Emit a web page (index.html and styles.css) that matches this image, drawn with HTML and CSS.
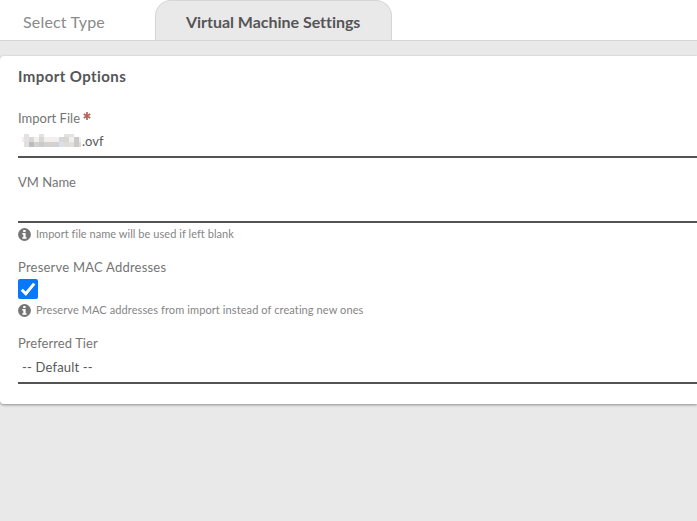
FILE: index.html
```html
<!DOCTYPE html>
<html lang="en">
<head>
<meta charset="utf-8">
<title>Virtual Machine Settings</title>
<link rel="stylesheet" href="styles.css">
</head>
<body>
<nav class="tabs">
  <div class="tab first"><span class="t-type">Select Type</span></div>
  <div class="tab active"><span class="t-settings">Virtual Machine Settings</span></div>
</nav>
<main class="panel">
  <h1><span class="t-options">Import Options</span></h1>
  <section class="field file">
    <label><span class="t-file">Import File</span><svg class="required" viewBox="0 0 8 8"><path d="M4 0v8M.7 2l6.6 4M.7 6l6.6-4"/></svg></label>
    <div class="control"><svg class="mosaic" viewBox="0 0 60 13" shape-rendering="crispEdges">
      <path fill="#f2f0ef" d="M0 3h59v5H0z"/>
      <path fill="#e3e1e1" d="M2 0h5v8H2zM17 0h5v3h-5zM42 0h10v3H42z"/>
      <path fill="#d9d6d6" d="M7 3h5v5H7zM17 3h5v5h-5zM37 3h10v5H37z"/>
      <path fill="#e4dfda" d="M2 8h5v5H2zM47 8h5v5h-5z"/>
      <path fill="#b9bdc3" d="M7 8h5v5H7z"/>
      <path fill="#d3d0d2" d="M12 8h5v5h-5zM22 8h15v5H22z"/>
      <path fill="#cacaca" d="M17 8h5v5h-5zM52 3h5v10h-5z"/>
      <path fill="#d9e1e8" d="M37 8h5v5h-5z"/>
      <path fill="#dcdcda" d="M42 8h5v5h-5zM57 8h2v5h-2z"/>
    </svg><span class="t-ovf">.ovf</span></div>
  </section>
  <section class="field name">
    <label><span class="t-name">VM Name</span></label>
    <div class="control"></div>
    <p class="help"><svg class="info" viewBox="0 0 13 13"><circle cx="6.5" cy="6.5" r="6.4"/><path d="M5.2 2h2.4v2H5.2zM4.3 5h3.3v4.2h1v1.6H4.3V9.2h1V6.6h-1z"/></svg><span class="t-help1">Import file name will be used if left blank</span></p>
  </section>
  <section class="field mac">
    <label><span class="t-mac">Preserve MAC Addresses</span></label>
    <svg class="checkbox" viewBox="0 0 20 20"><rect width="20" height="20" rx="2"/><path d="M3.8 10.7l4 4L16.2 4.6"/></svg>
    <p class="help"><svg class="info" viewBox="0 0 13 13"><circle cx="6.5" cy="6.5" r="6.4"/><path d="M5.2 2h2.4v2H5.2zM4.3 5h3.3v4.2h1v1.6H4.3V9.2h1V6.6h-1z"/></svg><span class="t-help2">Preserve MAC addresses from import instead of creating new ones</span></p>
  </section>
  <section class="field tier">
    <label><span class="t-tier">Preferred Tier</span></label>
    <div class="control"><span class="t-default">-- Default --</span></div>
  </section>
</main>
</body>
</html>
```

FILE: styles.css
```css
* { box-sizing: border-box; }
body {
  margin: 0;
  min-height: 521px;
  background: #e9e9e9;
  color: #757575;
  font: 13px/18px Lato, sans-serif;
  font-variant-ligatures: none;
  overflow: hidden;
}
span { white-space: nowrap; }
.tabs {
  display: flex;
  height: 41px;
  background: #fff;
  border-bottom: 1px solid #d6d6d6;
  font-size: 16px;
  line-height: 43px;
}
.first { width: 155px; padding-left: 23px; color: #8a8a8a; }
.active {
  width: 237px;
  height: 40px;
  padding-left: 30px;
  background: #e9e9e9;
  border: 1px solid #d6d6d6;
  border-bottom: 0;
  border-radius: 16px 16px 0 0;
  color: #555557;
  font-weight: 700;
  line-height: 41px;
}
.panel {
  height: 348px;
  margin-top: 15px;
  padding: 10px 0 0 18px;
  background: #fff;
  border-radius: 4px 0 0 4px;
  box-shadow: 0 1px 3px rgba(0, 0, 0, .4);
}
h1 { margin: 0; height: 43px; font-size: 15px; line-height: 20px; color: #555557; }
.field { display: flex; flex-direction: column; }
.file { height: 64px; }
.name { height: 85px; }
.mac { height: 76px; }
label { display: flex; height: 19px; line-height: 19px; }
.required { width: 8px; height: 8px; margin: 3px 0 0 3px; stroke: #b5655d; stroke-width: 1.7; }
.control {
  display: flex;
  align-items: center;
  height: 30px;
  padding: 0 0 2px 4px;
  border-bottom: 2px solid #545253;
  color: #58585a;
}
.name .control, .tier .control { height: 31px; }
.mosaic { width: 60px; height: 13px; margin-top: -1px; }
.help { display: flex; align-items: center; gap: 5px; margin: 4px 0 0; height: 15px; font-size: 11px; line-height: 15px; color: #858585; }
.help span { position: relative; top: -1px; }
.info { width: 13px; height: 13px; fill: #757575; }
.info path { fill: #fff; }
.checkbox { width: 20px; height: 20px; margin-top: 2px; fill: #0878fa; }
.checkbox path { fill: none; stroke: #fff; stroke-width: 3; }
.t-type { letter-spacing: .18px; }
.t-settings { letter-spacing: -.03px; }
.t-options { letter-spacing: .42px; }
.t-mac { letter-spacing: .22px; }
.t-tier { letter-spacing: .07px; }
.t-default { letter-spacing: .18px; }
.t-help1 { letter-spacing: .05px; }
.t-help2 { letter-spacing: .1px; }
```
